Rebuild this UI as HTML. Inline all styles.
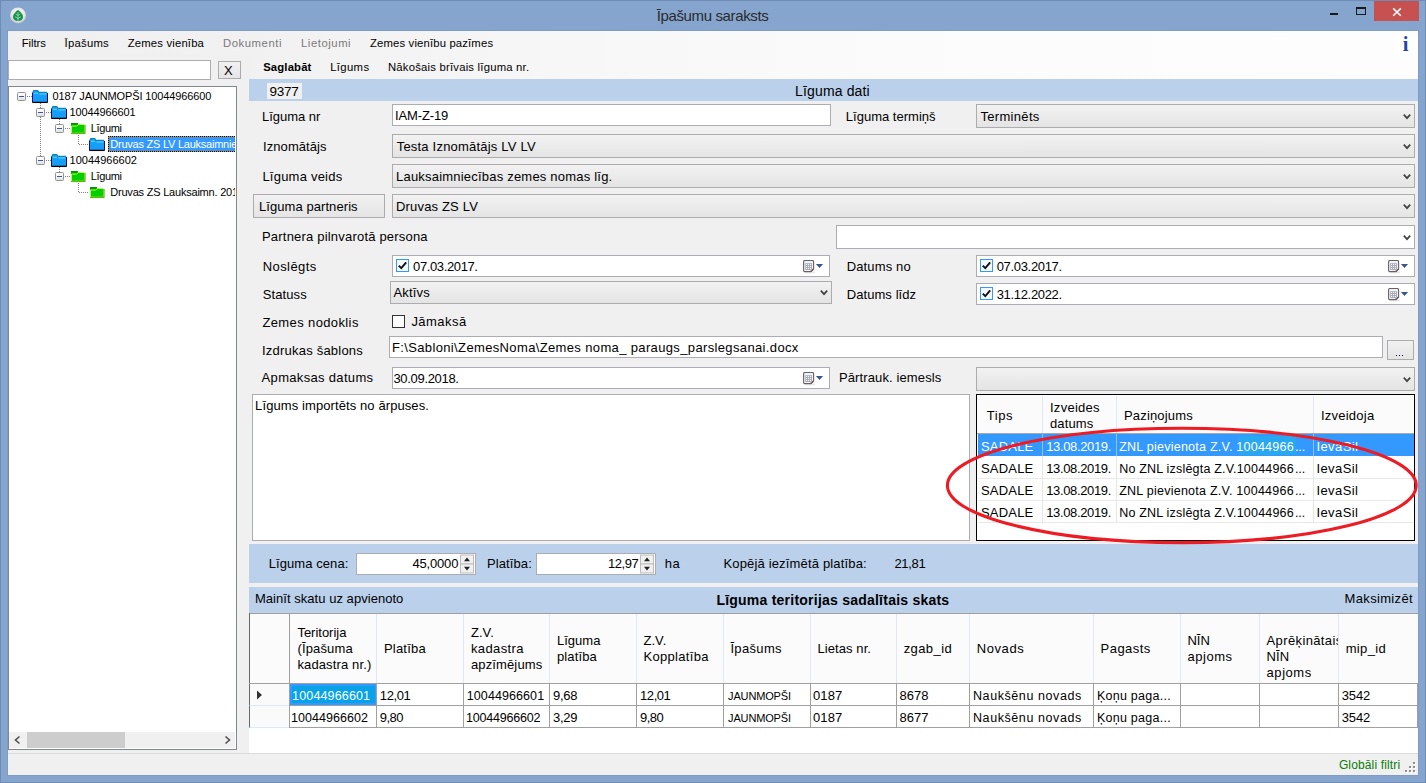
<!DOCTYPE html>
<html><head><meta charset="utf-8"><title>Īpašumu saraksts</title>
<style>
html,body{margin:0;padding:0;}
body{width:1426px;height:783px;position:relative;overflow:hidden;background:#87a6cf;font-family:"Liberation Sans",sans-serif;}
div,span,svg{position:absolute;box-sizing:border-box;}
span{white-space:pre;}

.cb{border:1px solid #acacac;background:linear-gradient(#f2f2f2,#e4e4e4);}
.in{border:1px solid #abadb3;background:#fff;}

</style></head><body>
<div style="left:0px;top:0px;width:1426px;height:783px;background:#86a5ce;border:1px solid #6f8cb5;"></div>
<div style="left:7px;top:30px;width:1412px;height:746px;background:#f0f0f0;border:1px solid #7f9cc4;"></div>
<div style="left:8px;top:31px;width:1410px;height:48px;background:linear-gradient(to right,#f0f0f0,#f1f1f1 17%,#f7f7f7 40%,#fcfcfc 70%,#fdfdfd);"></div>
<div style="left:8px;top:55px;width:241px;height:24px;background:#f0f0f0;"></div>
<svg style="left:9px;top:6px" width="18" height="18" viewBox="0 0 18 18"><defs><radialGradient id="ig" cx="0.5" cy="0.4" r="0.6"><stop offset="0" stop-color="#ffffff"/><stop offset="0.7" stop-color="#e4e4e4"/><stop offset="1" stop-color="#bcc2cb"/></radialGradient></defs><circle cx="9" cy="9.4" r="8" fill="url(#ig)"/><path d="M9 4 C11 5.5 14 8 14 11 C14 13.6 11.8 15 9 15 C6.2 15 4 13.6 4 11 C4 8 7 5.5 9 4Z" fill="#12934a"/><path d="M9 6v9M9 9.5l2.3-1.6M9 9.5L6.7 7.9M9 12.5l3-1.8M9 12.5l-3-1.8" stroke="#bfe3cd" stroke-width="0.7" fill="none"/></svg>
<div style="left:1374px;top:1px;width:45px;height:20px;background:#c75050;"></div>
<svg style="left:1392px;top:7px" width="10" height="10" viewBox="0 0 10 10"><path d="M1.2 1.4L8.8 8.8M8.8 1.4L1.2 8.8" stroke="#fff" stroke-width="1.5"/></svg>
<div style="left:1356px;top:7px;width:10px;height:8px;border:1px solid #1a1a1a;border-top:2px solid #1a1a1a;"></div>
<div style="left:1330px;top:13px;width:8px;height:2px;background:#1a1a1a;"></div>
<div style="left:1395px;top:34px;width:23px;height:20px;background:#fff;"></div>
<div class="in" style="left:8px;top:60px;width:203px;height:20px;"></div>
<div style="left:218px;top:61px;width:23px;height:18px;border:1px solid #acacac;background:linear-gradient(#f1f1f1,#e5e5e5);"></div>
<div style="left:8px;top:86px;width:229px;height:664px;background:#fff;border:1px solid #828790;"></div>
<div style="left:9px;top:732px;width:226px;height:16px;background:#f0f0f0;"></div>
<div style="left:27px;top:732px;width:98px;height:16px;background:#cdcdcd;"></div>
<svg style="left:9px;top:732px" width="226" height="16" viewBox="0 0 226 16"><path d="M10.5 4.5L6.5 8L10.5 11.5M216.5 4.5L220.5 8L216.5 11.5" stroke="#505050" stroke-width="1.6" fill="none"/></svg>
<svg style="left:0;top:0" width="250" height="783" viewBox="0 0 250 783"><defs><linearGradient id="fb" x1="0" y1="0" x2="0" y2="1"><stop offset="0" stop-color="#0aa6ff"/><stop offset="1" stop-color="#1e98f2"/></linearGradient><linearGradient id="pg" x1="0" y1="0" x2="0" y2="1"><stop offset="0" stop-color="#fff"/><stop offset="0.6" stop-color="#f2f2f2"/><stop offset="1" stop-color="#dcdcdc"/></linearGradient></defs><path d="M27 96.5H32 M40.5 103V108 M40.5 117V156 M46 112.5H51 M59.5 119V124 M65 128.5H70 M78.5 135V144.5H89 M46 160.5H51 M59.5 167V172 M65 176.5H70 M78.5 183V192.5H89" stroke="#808080" stroke-width="1" stroke-dasharray="1 1" fill="none"/><g transform="translate(17,92)"><rect x="0.5" y="0.5" width="8" height="8" rx="1" fill="url(#pg)" stroke="#919191"/><path d="M2 4.5H7" stroke="#3a50b4" stroke-width="1"/></g><g transform="translate(36,108)"><rect x="0.5" y="0.5" width="8" height="8" rx="1" fill="url(#pg)" stroke="#919191"/><path d="M2 4.5H7" stroke="#3a50b4" stroke-width="1"/></g><g transform="translate(55,124)"><rect x="0.5" y="0.5" width="8" height="8" rx="1" fill="url(#pg)" stroke="#919191"/><path d="M2 4.5H7" stroke="#3a50b4" stroke-width="1"/></g><g transform="translate(36,156)"><rect x="0.5" y="0.5" width="8" height="8" rx="1" fill="url(#pg)" stroke="#919191"/><path d="M2 4.5H7" stroke="#3a50b4" stroke-width="1"/></g><g transform="translate(55,172)"><rect x="0.5" y="0.5" width="8" height="8" rx="1" fill="url(#pg)" stroke="#919191"/><path d="M2 4.5H7" stroke="#3a50b4" stroke-width="1"/></g><g transform="translate(32,90)"><path d="M0.5 2.5 L1.5 0.5 L6 0.5 L7 2.5 L15.5 2.5 L15.5 12.5 L0.5 12.5 Z" fill="url(#fb)"/><path d="M1 2.2 L1.8 0.6 L5.8 0.6 L6.8 2.4 L15 2.4" stroke="#0c86b4" stroke-width="1.1" fill="none"/><path d="M2 3.3H6M7.5 4H14.5" stroke="#7fd4ff" stroke-width="0.9"/><path d="M0.5 2.5V12" stroke="#0a0a9c" stroke-width="1"/><path d="M15.5 3V12" stroke="#0a0a60" stroke-width="1"/><path d="M0.3 12.4H15.7" stroke="#000" stroke-width="1.3"/></g><g transform="translate(51,106)"><path d="M0.5 2.5 L1.5 0.5 L6 0.5 L7 2.5 L15.5 2.5 L15.5 12.5 L0.5 12.5 Z" fill="url(#fb)"/><path d="M1 2.2 L1.8 0.6 L5.8 0.6 L6.8 2.4 L15 2.4" stroke="#0c86b4" stroke-width="1.1" fill="none"/><path d="M2 3.3H6M7.5 4H14.5" stroke="#7fd4ff" stroke-width="0.9"/><path d="M0.5 2.5V12" stroke="#0a0a9c" stroke-width="1"/><path d="M15.5 3V12" stroke="#0a0a60" stroke-width="1"/><path d="M0.3 12.4H15.7" stroke="#000" stroke-width="1.3"/></g><g transform="translate(71,123)"><path d="M0 0 H7 V2 H14 V10.6 H0 Z" fill="#00d000"/><path d="M0 0 H7.2 L5.6 2.6 H0 Z" fill="#009a00"/><path d="M0.5 10.2V3H5.8L7.3 1.5H13.5" stroke="#b4ff48" stroke-width="1" fill="none"/><path d="M13.5 2V10.1H1" stroke="#86e800" stroke-width="1" fill="none"/><path d="M0 10.6H14.3M14.2 2V10.6" stroke="#5a9c1c" stroke-width="0.8" fill="none"/></g><g transform="translate(89,138)"><path d="M0.5 2.5 L1.5 0.5 L6 0.5 L7 2.5 L15.5 2.5 L15.5 12.5 L0.5 12.5 Z" fill="url(#fb)"/><path d="M1 2.2 L1.8 0.6 L5.8 0.6 L6.8 2.4 L15 2.4" stroke="#0c86b4" stroke-width="1.1" fill="none"/><path d="M2 3.3H6M7.5 4H14.5" stroke="#7fd4ff" stroke-width="0.9"/><path d="M0.5 2.5V12" stroke="#0a0a9c" stroke-width="1"/><path d="M15.5 3V12" stroke="#0a0a60" stroke-width="1"/><path d="M0.3 12.4H15.7" stroke="#000" stroke-width="1.3"/></g><g transform="translate(51,154)"><path d="M0.5 2.5 L1.5 0.5 L6 0.5 L7 2.5 L15.5 2.5 L15.5 12.5 L0.5 12.5 Z" fill="url(#fb)"/><path d="M1 2.2 L1.8 0.6 L5.8 0.6 L6.8 2.4 L15 2.4" stroke="#0c86b4" stroke-width="1.1" fill="none"/><path d="M2 3.3H6M7.5 4H14.5" stroke="#7fd4ff" stroke-width="0.9"/><path d="M0.5 2.5V12" stroke="#0a0a9c" stroke-width="1"/><path d="M15.5 3V12" stroke="#0a0a60" stroke-width="1"/><path d="M0.3 12.4H15.7" stroke="#000" stroke-width="1.3"/></g><g transform="translate(71,171)"><path d="M0 0 H7 V2 H14 V10.6 H0 Z" fill="#00d000"/><path d="M0 0 H7.2 L5.6 2.6 H0 Z" fill="#009a00"/><path d="M0.5 10.2V3H5.8L7.3 1.5H13.5" stroke="#b4ff48" stroke-width="1" fill="none"/><path d="M13.5 2V10.1H1" stroke="#86e800" stroke-width="1" fill="none"/><path d="M0 10.6H14.3M14.2 2V10.6" stroke="#5a9c1c" stroke-width="0.8" fill="none"/></g><g transform="translate(90,187)"><path d="M0 0 H7 V2 H14 V10.6 H0 Z" fill="#00d000"/><path d="M0 0 H7.2 L5.6 2.6 H0 Z" fill="#009a00"/><path d="M0.5 10.2V3H5.8L7.3 1.5H13.5" stroke="#b4ff48" stroke-width="1" fill="none"/><path d="M13.5 2V10.1H1" stroke="#86e800" stroke-width="1" fill="none"/><path d="M0 10.6H14.3M14.2 2V10.6" stroke="#5a9c1c" stroke-width="0.8" fill="none"/></g></svg>
<div style="left:108px;top:136px;width:127px;height:16px;background:repeating-linear-gradient(90deg,#201000 0 1px,#f08a10 1px 2px) 0 0/100% 1px no-repeat,repeating-linear-gradient(90deg,#201000 0 1px,#f08a10 1px 2px) 0 100%/100% 1px no-repeat,repeating-linear-gradient(180deg,#201000 0 1px,#f08a10 1px 2px) 0 0/1px 100% no-repeat,#3399ff;"></div>
<div style="left:249px;top:79px;width:1169px;height:22px;background:#bad0eb;"></div>
<div style="left:267px;top:83px;width:35px;height:16px;background:#f0f0f0;"></div>
<div class="in" style="left:392px;top:104px;width:439px;height:22px;"></div>
<div class="cb" style="left:976px;top:104px;width:439px;height:24px;"></div>
<svg style="left:1401.5px;top:112.7px" width="10" height="8" viewBox="0 0 10 8"><path d="M1.8 1.7L5 5.1L8.2 1.7" stroke="#444" stroke-width="1.8" fill="none"/></svg>
<div class="cb" style="left:392px;top:134px;width:1023px;height:24px;"></div>
<svg style="left:1401.5px;top:142.7px" width="10" height="8" viewBox="0 0 10 8"><path d="M1.8 1.7L5 5.1L8.2 1.7" stroke="#444" stroke-width="1.8" fill="none"/></svg>
<div class="cb" style="left:392px;top:164px;width:1023px;height:24px;"></div>
<svg style="left:1401.5px;top:172.7px" width="10" height="8" viewBox="0 0 10 8"><path d="M1.8 1.7L5 5.1L8.2 1.7" stroke="#444" stroke-width="1.8" fill="none"/></svg>
<div style="left:253px;top:194px;width:132px;height:24px;border:1px solid #acacac;background:linear-gradient(#f1f1f1,#e5e5e5);"></div>
<div class="cb" style="left:392px;top:194px;width:1023px;height:24px;"></div>
<svg style="left:1401.5px;top:202.7px" width="10" height="8" viewBox="0 0 10 8"><path d="M1.8 1.7L5 5.1L8.2 1.7" stroke="#444" stroke-width="1.8" fill="none"/></svg>
<div style="left:836px;top:225px;width:579px;height:24px;background:#fff;border:1px solid #abadb3;"></div>
<svg style="left:1401.5px;top:233.7px" width="10" height="8" viewBox="0 0 10 8"><path d="M1.8 1.7L5 5.1L8.2 1.7" stroke="#444" stroke-width="1.8" fill="none"/></svg>
<div class="in" style="left:392px;top:255px;width:438px;height:22px;"></div>
<svg style="left:803px;top:260px" width="24" height="14" viewBox="0 0 24 14"><path d="M2 12.6H9.6L11.6 10.8V13.2H3Z" fill="#000" opacity="0.12"/><path d="M2 0.5H9.2Q10.6 0.5 10.6 1.9V9.2L8.2 11.6H2Q0.6 11.6 0.6 10.2V1.9Q0.6 0.5 2 0.5Z" fill="#edf2fb" stroke="#6e5f5d" stroke-width="1.1"/><path d="M8.2 11.4V9.4H10.4" fill="none" stroke="#6e5f5d" stroke-width="1"/><rect x="2.2" y="3.2" width="6.8" height="6.8" fill="#a9aeb9"/><g fill="#f4f6fa"><rect x="3" y="4" width="1" height="1"/><rect x="5" y="4" width="1" height="1"/><rect x="7" y="4" width="1" height="1"/><rect x="3" y="6" width="1" height="1"/><rect x="5" y="6" width="1" height="1"/><rect x="7" y="6" width="1" height="1"/><rect x="3" y="8" width="1" height="1"/><rect x="5" y="8" width="1" height="1"/><rect x="7" y="8" width="1" height="1"/></g><path d="M12.9 3.9H20.1L16.5 8.1Z" fill="#3a5688"/></svg>
<div style="left:396px;top:259px;width:13px;height:13px;border:1px solid #3399ff;background:#f3f9ff;"><svg style="left:0;top:0" width="11" height="11" viewBox="0 0 11 11"><path d="M1.8 5.6L4.3 8.2L9.2 2.4" stroke="#111" stroke-width="1.9" fill="none"/></svg></div>
<div class="in" style="left:976px;top:255px;width:439px;height:22px;"></div>
<svg style="left:1388px;top:260px" width="24" height="14" viewBox="0 0 24 14"><path d="M2 12.6H9.6L11.6 10.8V13.2H3Z" fill="#000" opacity="0.12"/><path d="M2 0.5H9.2Q10.6 0.5 10.6 1.9V9.2L8.2 11.6H2Q0.6 11.6 0.6 10.2V1.9Q0.6 0.5 2 0.5Z" fill="#edf2fb" stroke="#6e5f5d" stroke-width="1.1"/><path d="M8.2 11.4V9.4H10.4" fill="none" stroke="#6e5f5d" stroke-width="1"/><rect x="2.2" y="3.2" width="6.8" height="6.8" fill="#a9aeb9"/><g fill="#f4f6fa"><rect x="3" y="4" width="1" height="1"/><rect x="5" y="4" width="1" height="1"/><rect x="7" y="4" width="1" height="1"/><rect x="3" y="6" width="1" height="1"/><rect x="5" y="6" width="1" height="1"/><rect x="7" y="6" width="1" height="1"/><rect x="3" y="8" width="1" height="1"/><rect x="5" y="8" width="1" height="1"/><rect x="7" y="8" width="1" height="1"/></g><path d="M12.9 3.9H20.1L16.5 8.1Z" fill="#3a5688"/></svg>
<div style="left:980px;top:259px;width:13px;height:13px;border:1px solid #3399ff;background:#f3f9ff;"><svg style="left:0;top:0" width="11" height="11" viewBox="0 0 11 11"><path d="M1.8 5.6L4.3 8.2L9.2 2.4" stroke="#111" stroke-width="1.9" fill="none"/></svg></div>
<div class="cb" style="left:390px;top:281px;width:442px;height:23px;"></div>
<svg style="left:818.5px;top:289.2px" width="10" height="8" viewBox="0 0 10 8"><path d="M1.8 1.7L5 5.1L8.2 1.7" stroke="#444" stroke-width="1.8" fill="none"/></svg>
<div class="in" style="left:976px;top:283px;width:439px;height:22px;"></div>
<svg style="left:1388px;top:288px" width="24" height="14" viewBox="0 0 24 14"><path d="M2 12.6H9.6L11.6 10.8V13.2H3Z" fill="#000" opacity="0.12"/><path d="M2 0.5H9.2Q10.6 0.5 10.6 1.9V9.2L8.2 11.6H2Q0.6 11.6 0.6 10.2V1.9Q0.6 0.5 2 0.5Z" fill="#edf2fb" stroke="#6e5f5d" stroke-width="1.1"/><path d="M8.2 11.4V9.4H10.4" fill="none" stroke="#6e5f5d" stroke-width="1"/><rect x="2.2" y="3.2" width="6.8" height="6.8" fill="#a9aeb9"/><g fill="#f4f6fa"><rect x="3" y="4" width="1" height="1"/><rect x="5" y="4" width="1" height="1"/><rect x="7" y="4" width="1" height="1"/><rect x="3" y="6" width="1" height="1"/><rect x="5" y="6" width="1" height="1"/><rect x="7" y="6" width="1" height="1"/><rect x="3" y="8" width="1" height="1"/><rect x="5" y="8" width="1" height="1"/><rect x="7" y="8" width="1" height="1"/></g><path d="M12.9 3.9H20.1L16.5 8.1Z" fill="#3a5688"/></svg>
<div style="left:980px;top:287px;width:13px;height:13px;border:1px solid #3399ff;background:#f3f9ff;"><svg style="left:0;top:0" width="11" height="11" viewBox="0 0 11 11"><path d="M1.8 5.6L4.3 8.2L9.2 2.4" stroke="#111" stroke-width="1.9" fill="none"/></svg></div>
<div style="left:392px;top:315px;width:13px;height:13px;border:1px solid #333;background:#fff;"></div>
<div class="in" style="left:389px;top:336px;width:994px;height:22px;"></div>
<div style="left:1387px;top:340px;width:27px;height:20px;border:1px solid #acacac;background:linear-gradient(#f1f1f1,#e5e5e5);"></div>
<div style="left:1396px;top:355px;width:1px;height:1px;background:#1a1040;"></div>
<div style="left:1399px;top:355px;width:1px;height:1px;background:#1a1040;"></div>
<div style="left:1402px;top:355px;width:1px;height:1px;background:#1a1040;"></div>
<div class="in" style="left:392px;top:367px;width:438px;height:22px;"></div>
<svg style="left:803px;top:372px" width="24" height="14" viewBox="0 0 24 14"><path d="M2 12.6H9.6L11.6 10.8V13.2H3Z" fill="#000" opacity="0.12"/><path d="M2 0.5H9.2Q10.6 0.5 10.6 1.9V9.2L8.2 11.6H2Q0.6 11.6 0.6 10.2V1.9Q0.6 0.5 2 0.5Z" fill="#edf2fb" stroke="#6e5f5d" stroke-width="1.1"/><path d="M8.2 11.4V9.4H10.4" fill="none" stroke="#6e5f5d" stroke-width="1"/><rect x="2.2" y="3.2" width="6.8" height="6.8" fill="#a9aeb9"/><g fill="#f4f6fa"><rect x="3" y="4" width="1" height="1"/><rect x="5" y="4" width="1" height="1"/><rect x="7" y="4" width="1" height="1"/><rect x="3" y="6" width="1" height="1"/><rect x="5" y="6" width="1" height="1"/><rect x="7" y="6" width="1" height="1"/><rect x="3" y="8" width="1" height="1"/><rect x="5" y="8" width="1" height="1"/><rect x="7" y="8" width="1" height="1"/></g><path d="M12.9 3.9H20.1L16.5 8.1Z" fill="#3a5688"/></svg>
<div class="cb" style="left:976px;top:367px;width:439px;height:24px;"></div>
<svg style="left:1401.5px;top:375.7px" width="10" height="8" viewBox="0 0 10 8"><path d="M1.8 1.7L5 5.1L8.2 1.7" stroke="#444" stroke-width="1.8" fill="none"/></svg>
<div style="left:252px;top:394px;width:718px;height:147px;border:1px solid #abadb3;background:#fff;"></div>
<div style="left:976px;top:394px;width:439px;height:147px;background:#fff;border:1px solid #000;"></div>
<div style="left:977px;top:395px;width:437px;height:39px;background:#fbfbfb;"></div>
<div style="left:1042px;top:396px;width:1px;height:38px;background:#dfe9f5;"></div>
<div style="left:1042px;top:434px;width:1px;height:88px;background:#e6e6e6;"></div>
<div style="left:1116px;top:396px;width:1px;height:38px;background:#dfe9f5;"></div>
<div style="left:1116px;top:434px;width:1px;height:88px;background:#e6e6e6;"></div>
<div style="left:1313px;top:396px;width:1px;height:38px;background:#dfe9f5;"></div>
<div style="left:1313px;top:434px;width:1px;height:88px;background:#e6e6e6;"></div>
<div style="left:978px;top:434px;width:436px;height:22px;background:#3399ff;"></div>
<div style="left:1042px;top:434px;width:1px;height:22px;background:#8cc3ff;"></div>
<div style="left:1116px;top:434px;width:1px;height:22px;background:#8cc3ff;"></div>
<div style="left:1313px;top:434px;width:1px;height:22px;background:#8cc3ff;"></div>
<div style="left:978px;top:478px;width:435px;height:1px;background:#e9e9e9;"></div>
<div style="left:978px;top:500px;width:435px;height:1px;background:#e9e9e9;"></div>
<div style="left:978px;top:522px;width:435px;height:1px;background:#e9e9e9;"></div>
<div style="left:977px;top:433px;width:437px;height:1px;background:#a8a8a8;"></div>
<div style="left:1239px;top:436px;width:57px;height:19px;background:#28a8f0;"></div>
<svg style="left:940px;top:420px;z-index:50" width="486" height="130" viewBox="940 420 486 130"><ellipse cx="1181.8" cy="485.4" rx="234.4" ry="57.2" fill="none" stroke="#ed1c24" stroke-width="3.1"/></svg>
<div style="left:249px;top:544px;width:1169px;height:39px;background:#bad0eb;"></div>
<div style="left:249px;top:583px;width:1169px;height:4px;background:#f0f0f0;"></div>
<div style="left:249px;top:587px;width:1169px;height:26px;background:#bad0eb;"></div>
<div class="in" style="left:356px;top:553px;width:120px;height:22px;"></div>
<svg style="left:459px;top:554px" width="16" height="20" viewBox="0 0 16 20"><rect x="1.5" y="1" width="13" height="9" fill="#f0f0f0" stroke="#bdbdbd" stroke-width="1"/><rect x="1.5" y="10" width="13" height="9" fill="#f0f0f0" stroke="#bdbdbd" stroke-width="1"/><path d="M5 7.2L8 3.6L11 7.2Z M5 12.8L8 16.4L11 12.8Z" fill="#222"/></svg>
<div class="in" style="left:536px;top:553px;width:120px;height:22px;"></div>
<svg style="left:639px;top:554px" width="16" height="20" viewBox="0 0 16 20"><rect x="1.5" y="1" width="13" height="9" fill="#f0f0f0" stroke="#bdbdbd" stroke-width="1"/><rect x="1.5" y="10" width="13" height="9" fill="#f0f0f0" stroke="#bdbdbd" stroke-width="1"/><path d="M5 7.2L8 3.6L11 7.2Z M5 12.8L8 16.4L11 12.8Z" fill="#222"/></svg>
<div style="left:249px;top:613px;width:1169px;height:140px;background:#fff;"></div>
<div style="left:249px;top:613px;width:1169px;height:71px;background:#fbfbfb;"></div>
<div style="left:249px;top:613px;width:1169px;height:1px;background:#a0a0a0;"></div>
<div style="left:249px;top:613px;width:1px;height:114px;background:#696969;"></div>
<div style="left:289px;top:614px;width:1px;height:69px;background:#dfe9f5;"></div>
<div style="left:376px;top:614px;width:1px;height:69px;background:#dfe9f5;"></div>
<div style="left:463px;top:614px;width:1px;height:69px;background:#dfe9f5;"></div>
<div style="left:549px;top:614px;width:1px;height:69px;background:#dfe9f5;"></div>
<div style="left:636px;top:614px;width:1px;height:69px;background:#dfe9f5;"></div>
<div style="left:723px;top:614px;width:1px;height:69px;background:#dfe9f5;"></div>
<div style="left:810px;top:614px;width:1px;height:69px;background:#dfe9f5;"></div>
<div style="left:896px;top:614px;width:1px;height:69px;background:#dfe9f5;"></div>
<div style="left:969px;top:614px;width:1px;height:69px;background:#dfe9f5;"></div>
<div style="left:1093px;top:614px;width:1px;height:69px;background:#dfe9f5;"></div>
<div style="left:1180px;top:614px;width:1px;height:69px;background:#dfe9f5;"></div>
<div style="left:1259px;top:614px;width:1px;height:69px;background:#dfe9f5;"></div>
<div style="left:1338px;top:614px;width:1px;height:69px;background:#dfe9f5;"></div>
<div style="left:289px;top:613px;width:1px;height:71px;background:#a0a0a0;"></div>
<div style="left:249px;top:683px;width:1169px;height:1px;background:#a0a0a0;"></div>
<div style="left:249px;top:705px;width:1169px;height:1px;background:#a0a0a0;"></div>
<div style="left:249px;top:727px;width:1169px;height:1px;background:#a0a0a0;"></div>
<div style="left:289px;top:683px;width:1px;height:45px;background:#a0a0a0;"></div>
<div style="left:376px;top:683px;width:1px;height:45px;background:#a0a0a0;"></div>
<div style="left:463px;top:683px;width:1px;height:45px;background:#a0a0a0;"></div>
<div style="left:549px;top:683px;width:1px;height:45px;background:#a0a0a0;"></div>
<div style="left:636px;top:683px;width:1px;height:45px;background:#a0a0a0;"></div>
<div style="left:723px;top:683px;width:1px;height:45px;background:#a0a0a0;"></div>
<div style="left:810px;top:683px;width:1px;height:45px;background:#a0a0a0;"></div>
<div style="left:896px;top:683px;width:1px;height:45px;background:#a0a0a0;"></div>
<div style="left:969px;top:683px;width:1px;height:45px;background:#a0a0a0;"></div>
<div style="left:1093px;top:683px;width:1px;height:45px;background:#a0a0a0;"></div>
<div style="left:1180px;top:683px;width:1px;height:45px;background:#a0a0a0;"></div>
<div style="left:1259px;top:683px;width:1px;height:45px;background:#a0a0a0;"></div>
<div style="left:1338px;top:683px;width:1px;height:45px;background:#a0a0a0;"></div>
<div style="left:1417px;top:683px;width:1px;height:45px;background:#a0a0a0;"></div>
<div style="left:250px;top:684px;width:39px;height:21px;background:#fafafa;"></div>
<div style="left:250px;top:706px;width:39px;height:21px;background:#fafafa;"></div>
<div style="left:250px;top:705px;width:39px;height:1px;background:#dfe9f5;"></div>
<div style="left:250px;top:727px;width:39px;height:1px;background:#dfe9f5;"></div>
<div style="left:290px;top:684px;width:86px;height:21px;background:#3399ff;"></div>
<div style="left:292px;top:686px;width:83px;height:17px;background:#07a2e8;"></div>
<svg style="left:256px;top:689px" width="8" height="12" viewBox="0 0 8 12"><path d="M1 1.4L6 6L1 10.6Z" fill="#333"/></svg>
<div style="left:8px;top:753px;width:1410px;height:1px;background:#dcdcdc;"></div>
<svg style="left:1405px;top:761px" width="13" height="13" viewBox="0 0 13 13"><g fill="#fff"><rect x="9" y="2" width="2" height="2"/><rect x="9" y="6" width="2" height="2"/><rect x="9" y="10" width="2" height="2"/><rect x="5" y="6" width="2" height="2"/><rect x="5" y="10" width="2" height="2"/><rect x="1" y="10" width="2" height="2"/></g><g fill="#8e8e8e"><rect x="8" y="1" width="2" height="2"/><rect x="8" y="5" width="2" height="2"/><rect x="8" y="9" width="2" height="2"/><rect x="4" y="5" width="2" height="2"/><rect x="4" y="9" width="2" height="2"/><rect x="0" y="9" width="2" height="2"/></g></svg>
<span style="left:656.70px;top:7.00px;font:400 15px/17px 'Liberation Sans', sans-serif;letter-spacing:-0.365px;color:#2a2a2a;">Īpašumu saraksts</span>
<span style="left:1402.80px;top:33.00px;font:700 20.5px/23px 'Liberation Serif', serif;letter-spacing:0.000px;color:#1f45a8;">i</span>
<span style="left:21.70px;top:37.00px;font:400 11.3px/12px 'Liberation Sans', sans-serif;letter-spacing:-0.047px;color:#000;">Filtrs</span>
<span style="left:64.60px;top:37.00px;font:400 11.3px/12px 'Liberation Sans', sans-serif;letter-spacing:0.242px;color:#000;">Īpašums</span>
<span style="left:127.70px;top:37.00px;font:400 11.3px/12px 'Liberation Sans', sans-serif;letter-spacing:0.177px;color:#000;">Zemes vienība</span>
<span style="left:223.00px;top:37.00px;font:400 11.3px/12px 'Liberation Sans', sans-serif;letter-spacing:0.556px;color:#7a7a7a;">Dokumenti</span>
<span style="left:301.00px;top:37.00px;font:400 11.3px/12px 'Liberation Sans', sans-serif;letter-spacing:0.553px;color:#7a7a7a;">Lietojumi</span>
<span style="left:370.00px;top:37.00px;font:400 11.3px/12px 'Liberation Sans', sans-serif;letter-spacing:0.155px;color:#000;">Zemes vienību pazīmes</span>
<span style="left:263.20px;top:61.00px;font:700 11.3px/12px 'Liberation Sans', sans-serif;letter-spacing:0.151px;color:#000;">Saglabāt</span>
<span style="left:330.20px;top:61.00px;font:400 11.3px/12px 'Liberation Sans', sans-serif;letter-spacing:0.359px;color:#000;">Līgums</span>
<span style="left:388.00px;top:61.00px;font:400 11.3px/12px 'Liberation Sans', sans-serif;letter-spacing:0.210px;color:#000;">Nākošais brīvais līguma nr.</span>
<span style="left:223.90px;top:63.00px;font:400 13px/15px 'Liberation Sans', sans-serif;letter-spacing:0.000px;color:#000;">X</span>
<span style="left:52.40px;top:90.00px;font:400 11px/12px 'Liberation Sans', sans-serif;letter-spacing:-0.122px;color:#000;">0187 JAUNMOPŠI 10044966600</span>
<span style="left:69.60px;top:106.00px;font:400 11px/12px 'Liberation Sans', sans-serif;letter-spacing:-0.136px;color:#000;">10044966601</span>
<span style="left:90.70px;top:122.00px;font:400 11px/12px 'Liberation Sans', sans-serif;letter-spacing:-0.355px;color:#000;">Līgumi</span>
<div style="left:107.90px;top:135.00px;width:127.10px;height:18px;overflow:hidden;"><span style="left:2.4px;top:3px;font:400 11px/12px 'Liberation Sans', sans-serif;letter-spacing:-0.237px;color:#fff;">Druvas ZS LV Lauksaimniec</span></div>
<span style="left:69.60px;top:154.00px;font:400 11px/12px 'Liberation Sans', sans-serif;letter-spacing:0.000px;color:#000;">10044966602</span>
<span style="left:90.70px;top:170.00px;font:400 11px/12px 'Liberation Sans', sans-serif;letter-spacing:-0.355px;color:#000;">Līgumi</span>
<div style="left:107.90px;top:183.00px;width:126.80px;height:18px;overflow:hidden;"><span style="left:2.4px;top:3px;font:400 11px/12px 'Liberation Sans', sans-serif;letter-spacing:-0.211px;color:#000;">Druvas ZS Lauksaimn. 2017</span></div>
<span style="left:269.60px;top:84.00px;font:400 13.5px/15px 'Liberation Sans', sans-serif;letter-spacing:-0.262px;color:#000;">9377</span>
<span style="left:795.10px;top:83.00px;font:400 14px/16px 'Liberation Sans', sans-serif;letter-spacing:0.139px;color:#000;">Līguma dati</span>
<span style="left:262.00px;top:109.00px;font:400 13px/15px 'Liberation Sans', sans-serif;letter-spacing:-0.027px;color:#000;">Līguma nr</span>
<span style="left:395.00px;top:108.00px;font:400 13px/15px 'Liberation Sans', sans-serif;letter-spacing:-0.121px;color:#000;">IAM-Z-19</span>
<span style="left:845.80px;top:109.00px;font:400 13px/15px 'Liberation Sans', sans-serif;letter-spacing:0.015px;color:#000;">Līguma termiņš</span>
<span style="left:980.40px;top:109.00px;font:400 13px/15px 'Liberation Sans', sans-serif;letter-spacing:0.327px;color:#000;">Terminēts</span>
<span style="left:263.10px;top:139.00px;font:400 13px/15px 'Liberation Sans', sans-serif;letter-spacing:0.062px;color:#000;">Iznomātājs</span>
<span style="left:396.70px;top:139.00px;font:400 13px/15px 'Liberation Sans', sans-serif;letter-spacing:0.207px;color:#000;">Testa Iznomātājs LV LV</span>
<span style="left:262.40px;top:169.00px;font:400 13px/15px 'Liberation Sans', sans-serif;letter-spacing:0.223px;color:#000;">Līguma veids</span>
<span style="left:396.00px;top:169.00px;font:400 13px/15px 'Liberation Sans', sans-serif;letter-spacing:0.208px;color:#000;">Lauksaimniecības zemes nomas līg.</span>
<span style="left:258.90px;top:199.00px;font:400 13px/15px 'Liberation Sans', sans-serif;letter-spacing:0.077px;color:#000;">Līguma partneris</span>
<span style="left:396.00px;top:199.00px;font:400 13px/15px 'Liberation Sans', sans-serif;letter-spacing:0.171px;color:#000;">Druvas ZS LV</span>
<span style="left:262.00px;top:229.00px;font:400 13px/15px 'Liberation Sans', sans-serif;letter-spacing:0.199px;color:#000;">Partnera pilnvarotā persona</span>
<span style="left:262.70px;top:259.00px;font:400 13px/15px 'Liberation Sans', sans-serif;letter-spacing:0.428px;color:#000;">Noslēgts</span>
<span style="left:413.10px;top:259.00px;font:400 13px/15px 'Liberation Sans', sans-serif;letter-spacing:-0.381px;color:#000;">07.03.2017.</span>
<span style="left:846.70px;top:259.00px;font:400 13px/15px 'Liberation Sans', sans-serif;letter-spacing:0.136px;color:#000;">Datums no</span>
<span style="left:996.70px;top:259.00px;font:400 13px/15px 'Liberation Sans', sans-serif;letter-spacing:-0.326px;color:#000;">07.03.2017.</span>
<span style="left:262.70px;top:287.00px;font:400 13px/15px 'Liberation Sans', sans-serif;letter-spacing:0.106px;color:#000;">Statuss</span>
<span style="left:393.40px;top:285.00px;font:400 13px/15px 'Liberation Sans', sans-serif;letter-spacing:0.182px;color:#000;">Aktīvs</span>
<span style="left:846.70px;top:287.00px;font:400 13px/15px 'Liberation Sans', sans-serif;letter-spacing:0.078px;color:#000;">Datums līdz</span>
<span style="left:996.70px;top:287.00px;font:400 13px/15px 'Liberation Sans', sans-serif;letter-spacing:-0.326px;color:#000;">31.12.2022.</span>
<span style="left:262.40px;top:315.00px;font:400 13px/15px 'Liberation Sans', sans-serif;letter-spacing:0.382px;color:#000;">Zemes nodoklis</span>
<span style="left:411.40px;top:314.00px;font:400 13px/15px 'Liberation Sans', sans-serif;letter-spacing:0.467px;color:#000;">Jāmaksā</span>
<span style="left:262.00px;top:343.00px;font:400 13px/15px 'Liberation Sans', sans-serif;letter-spacing:0.215px;color:#000;">Izdrukas šablons</span>
<span style="left:392.00px;top:340.00px;font:400 13px/15px 'Liberation Sans', sans-serif;letter-spacing:0.359px;color:#000;">F:\Sabloni\ZemesNoma\Zemes noma_ paraugs_parslegsanai.docx</span>
<span style="left:261.60px;top:370.00px;font:400 13px/15px 'Liberation Sans', sans-serif;letter-spacing:0.324px;color:#000;">Apmaksas datums</span>
<span style="left:393.40px;top:371.00px;font:400 13px/15px 'Liberation Sans', sans-serif;letter-spacing:-0.308px;color:#000;">30.09.2018.</span>
<span style="left:838.90px;top:370.00px;font:400 13px/15px 'Liberation Sans', sans-serif;letter-spacing:0.122px;color:#000;">Pārtrauk. iemesls</span>
<span style="left:255.10px;top:398.00px;font:400 13px/15px 'Liberation Sans', sans-serif;letter-spacing:0.095px;color:#000;">Līgums importēts no ārpuses.</span>
<span style="left:986.70px;top:408.00px;font:400 13px/15px 'Liberation Sans', sans-serif;letter-spacing:0.580px;color:#000;">Tips</span>
<span style="left:1050.00px;top:400.00px;font:400 13px/15px 'Liberation Sans', sans-serif;letter-spacing:0.262px;color:#000;">Izveides</span>
<span style="left:1050.00px;top:416.00px;font:400 13px/15px 'Liberation Sans', sans-serif;letter-spacing:0.127px;color:#000;">datums</span>
<span style="left:1124.00px;top:408.00px;font:400 13px/15px 'Liberation Sans', sans-serif;letter-spacing:0.160px;color:#000;">Paziņojums</span>
<span style="left:1320.90px;top:408.00px;font:400 13px/15px 'Liberation Sans', sans-serif;letter-spacing:0.243px;color:#000;">Izveidoja</span>
<span style="left:981.00px;top:439.00px;font:400 13px/15px 'Liberation Sans', sans-serif;letter-spacing:0.198px;color:#fff;">SADALE</span>
<span style="left:1046.20px;top:439.00px;font:400 13px/15px 'Liberation Sans', sans-serif;letter-spacing:-0.362px;color:#fff;">13.08.2019.</span>
<span style="left:1119.20px;top:440.00px;font:400 12.5px/14px 'Liberation Sans', sans-serif;letter-spacing:0.241px;color:#fff;">ZNL pievienota Z.V. 10044966</span>
<span style="left:1294.90px;top:440.00px;font:400 12.5px/14px 'Liberation Sans', sans-serif;letter-spacing:-0.074px;color:#fff;">...</span>
<span style="left:1316.40px;top:439.00px;font:400 13px/15px 'Liberation Sans', sans-serif;letter-spacing:0.424px;color:#fff;">IevaSil</span>
<span style="left:981.00px;top:461.00px;font:400 13px/15px 'Liberation Sans', sans-serif;letter-spacing:0.198px;color:#000;">SADALE</span>
<span style="left:1046.20px;top:461.00px;font:400 13px/15px 'Liberation Sans', sans-serif;letter-spacing:-0.362px;color:#000;">13.08.2019.</span>
<span style="left:1119.20px;top:462.00px;font:400 12.5px/14px 'Liberation Sans', sans-serif;letter-spacing:0.192px;color:#000;">No ZNL izslēgta Z.V.10044966</span>
<span style="left:1294.90px;top:462.00px;font:400 12.5px/14px 'Liberation Sans', sans-serif;letter-spacing:-0.074px;color:#000;">...</span>
<span style="left:1316.40px;top:461.00px;font:400 13px/15px 'Liberation Sans', sans-serif;letter-spacing:0.424px;color:#000;">IevaSil</span>
<span style="left:981.00px;top:483.00px;font:400 13px/15px 'Liberation Sans', sans-serif;letter-spacing:0.198px;color:#000;">SADALE</span>
<span style="left:1046.20px;top:483.00px;font:400 13px/15px 'Liberation Sans', sans-serif;letter-spacing:-0.362px;color:#000;">13.08.2019.</span>
<span style="left:1119.20px;top:484.00px;font:400 12.5px/14px 'Liberation Sans', sans-serif;letter-spacing:0.241px;color:#000;">ZNL pievienota Z.V. 10044966</span>
<span style="left:1294.90px;top:484.00px;font:400 12.5px/14px 'Liberation Sans', sans-serif;letter-spacing:-0.074px;color:#000;">...</span>
<span style="left:1316.40px;top:483.00px;font:400 13px/15px 'Liberation Sans', sans-serif;letter-spacing:0.424px;color:#000;">IevaSil</span>
<span style="left:981.00px;top:505.00px;font:400 13px/15px 'Liberation Sans', sans-serif;letter-spacing:0.198px;color:#000;">SADALE</span>
<span style="left:1046.20px;top:505.00px;font:400 13px/15px 'Liberation Sans', sans-serif;letter-spacing:-0.362px;color:#000;">13.08.2019.</span>
<span style="left:1119.20px;top:506.00px;font:400 12.5px/14px 'Liberation Sans', sans-serif;letter-spacing:0.192px;color:#000;">No ZNL izslēgta Z.V.10044966</span>
<span style="left:1294.90px;top:506.00px;font:400 12.5px/14px 'Liberation Sans', sans-serif;letter-spacing:-0.074px;color:#000;">...</span>
<span style="left:1316.40px;top:505.00px;font:400 13px/15px 'Liberation Sans', sans-serif;letter-spacing:0.424px;color:#000;">IevaSil</span>
<span style="left:268.80px;top:556.00px;font:400 13px/15px 'Liberation Sans', sans-serif;letter-spacing:0.068px;color:#000;">Līguma cena:</span>
<span style="left:412.40px;top:556.00px;font:400 13px/15px 'Liberation Sans', sans-serif;letter-spacing:-0.171px;color:#000;">45,0000</span>
<span style="left:487.00px;top:556.00px;font:400 13px/15px 'Liberation Sans', sans-serif;letter-spacing:0.101px;color:#000;">Platība:</span>
<span style="left:607.90px;top:556.00px;font:400 13px/15px 'Liberation Sans', sans-serif;letter-spacing:-0.409px;color:#000;">12,97</span>
<span style="left:664.70px;top:556.00px;font:400 13px/15px 'Liberation Sans', sans-serif;letter-spacing:0.616px;color:#000;">ha</span>
<span style="left:723.40px;top:556.00px;font:400 13px/15px 'Liberation Sans', sans-serif;letter-spacing:0.167px;color:#000;">Kopējā iezīmētā platība:</span>
<span style="left:894.40px;top:556.00px;font:400 13px/15px 'Liberation Sans', sans-serif;letter-spacing:-0.309px;color:#000;">21,81</span>
<span style="left:254.90px;top:591.00px;font:400 13px/15px 'Liberation Sans', sans-serif;letter-spacing:0.043px;color:#000;">Mainīt skatu uz apvienoto</span>
<span style="left:716.40px;top:592.00px;font:700 14px/16px 'Liberation Sans', sans-serif;letter-spacing:0.232px;color:#000;">Līguma teritorijas sadalītais skats</span>
<span style="left:1344.60px;top:591.00px;font:400 13px/15px 'Liberation Sans', sans-serif;letter-spacing:0.328px;color:#000;">Maksimizēt</span>
<span style="left:297.40px;top:625.00px;font:400 13px/15px 'Liberation Sans', sans-serif;letter-spacing:-0.013px;color:#000;">Teritorija</span>
<span style="left:297.40px;top:641.00px;font:400 13px/15px 'Liberation Sans', sans-serif;letter-spacing:0.162px;color:#000;">(Īpašuma</span>
<span style="left:297.40px;top:657.00px;font:400 13px/15px 'Liberation Sans', sans-serif;letter-spacing:0.133px;color:#000;">kadastra nr.)</span>
<span style="left:383.90px;top:641.00px;font:400 13px/15px 'Liberation Sans', sans-serif;letter-spacing:0.217px;color:#000;">Platība</span>
<span style="left:470.90px;top:625.00px;font:400 13px/15px 'Liberation Sans', sans-serif;letter-spacing:0.086px;color:#000;">Z.V.</span>
<span style="left:470.90px;top:641.00px;font:400 13px/15px 'Liberation Sans', sans-serif;letter-spacing:0.391px;color:#000;">kadastra</span>
<span style="left:470.90px;top:657.00px;font:400 13px/15px 'Liberation Sans', sans-serif;letter-spacing:0.142px;color:#000;">apzīmējums</span>
<span style="left:556.90px;top:633.00px;font:400 13px/15px 'Liberation Sans', sans-serif;letter-spacing:0.021px;color:#000;">Līguma</span>
<span style="left:556.90px;top:649.00px;font:400 13px/15px 'Liberation Sans', sans-serif;letter-spacing:0.136px;color:#000;">platība</span>
<span style="left:643.40px;top:633.00px;font:400 13px/15px 'Liberation Sans', sans-serif;letter-spacing:0.086px;color:#000;">Z.V.</span>
<span style="left:643.40px;top:649.00px;font:400 13px/15px 'Liberation Sans', sans-serif;letter-spacing:0.333px;color:#000;">Kopplatība</span>
<span style="left:730.40px;top:641.00px;font:400 13px/15px 'Liberation Sans', sans-serif;letter-spacing:0.337px;color:#000;">Īpašums</span>
<span style="left:817.40px;top:641.00px;font:400 13px/15px 'Liberation Sans', sans-serif;letter-spacing:0.093px;color:#000;">Lietas nr.</span>
<span style="left:903.70px;top:641.00px;font:400 13px/15px 'Liberation Sans', sans-serif;letter-spacing:0.408px;color:#000;">zgab_id</span>
<span style="left:976.70px;top:641.00px;font:400 13px/15px 'Liberation Sans', sans-serif;letter-spacing:0.604px;color:#000;">Novads</span>
<span style="left:1100.60px;top:641.00px;font:400 13px/15px 'Liberation Sans', sans-serif;letter-spacing:0.445px;color:#000;">Pagasts</span>
<span style="left:1187.40px;top:633.00px;font:400 13px/15px 'Liberation Sans', sans-serif;letter-spacing:0.036px;color:#000;">NĪN</span>
<span style="left:1187.40px;top:649.00px;font:400 13px/15px 'Liberation Sans', sans-serif;letter-spacing:0.546px;color:#000;">apjoms</span>
<div style="left:1264.20px;top:630.00px;width:73.80px;height:21px;overflow:hidden;"><span style="left:2.4px;top:3px;font:400 13px/15px 'Liberation Sans', sans-serif;letter-spacing:0.368px;color:#000;">Aprēķinātais</span></div>
<span style="left:1266.60px;top:649.00px;font:400 13px/15px 'Liberation Sans', sans-serif;letter-spacing:0.036px;color:#000;">NĪN</span>
<span style="left:1266.60px;top:665.00px;font:400 13px/15px 'Liberation Sans', sans-serif;letter-spacing:0.546px;color:#000;">apjoms</span>
<span style="left:1345.70px;top:641.00px;font:400 13px/15px 'Liberation Sans', sans-serif;letter-spacing:0.334px;color:#000;">mip_id</span>
<span style="left:292.10px;top:689.00px;font:400 12.5px/14px 'Liberation Sans', sans-serif;letter-spacing:0.147px;color:#fff;">10044966601</span>
<span style="left:379.80px;top:688.00px;font:400 13px/15px 'Liberation Sans', sans-serif;letter-spacing:-0.389px;color:#000;">12,01</span>
<span style="left:466.80px;top:689.00px;font:400 12.5px/14px 'Liberation Sans', sans-serif;letter-spacing:0.083px;color:#000;">10044966601</span>
<span style="left:552.90px;top:688.00px;font:400 13px/15px 'Liberation Sans', sans-serif;letter-spacing:-0.203px;color:#000;">9,68</span>
<span style="left:640.10px;top:688.00px;font:400 13px/15px 'Liberation Sans', sans-serif;letter-spacing:-0.449px;color:#000;">12,01</span>
<span style="left:728.10px;top:690.00px;font:400 11px/12px 'Liberation Sans', sans-serif;letter-spacing:-0.165px;color:#000;">JAUNMOPŠI</span>
<span style="left:813.10px;top:688.00px;font:400 13px/15px 'Liberation Sans', sans-serif;letter-spacing:0.045px;color:#000;">0187</span>
<span style="left:899.40px;top:688.00px;font:400 13px/15px 'Liberation Sans', sans-serif;letter-spacing:0.020px;color:#000;">8678</span>
<span style="left:973.00px;top:689.00px;font:400 12.5px/14px 'Liberation Sans', sans-serif;letter-spacing:0.581px;color:#000;">Naukšēnu novads</span>
<span style="left:1096.90px;top:689.00px;font:400 12.5px/14px 'Liberation Sans', sans-serif;letter-spacing:0.258px;color:#000;">Ķoņu paga...</span>
<span style="left:1341.80px;top:688.00px;font:400 13px/15px 'Liberation Sans', sans-serif;letter-spacing:-0.180px;color:#000;">3542</span>
<span style="left:291.00px;top:711.00px;font:400 12.5px/14px 'Liberation Sans', sans-serif;letter-spacing:0.056px;color:#000;">10044966602</span>
<span style="left:379.80px;top:710.00px;font:400 13px/15px 'Liberation Sans', sans-serif;letter-spacing:-0.553px;color:#000;">9,80</span>
<span style="left:465.90px;top:711.00px;font:400 12.5px/14px 'Liberation Sans', sans-serif;letter-spacing:-0.180px;color:#000;">10044966602</span>
<span style="left:552.90px;top:710.00px;font:400 13px/15px 'Liberation Sans', sans-serif;letter-spacing:-0.203px;color:#000;">3,29</span>
<span style="left:640.10px;top:710.00px;font:400 13px/15px 'Liberation Sans', sans-serif;letter-spacing:-0.553px;color:#000;">9,80</span>
<span style="left:728.10px;top:712.00px;font:400 11px/12px 'Liberation Sans', sans-serif;letter-spacing:-0.165px;color:#000;">JAUNMOPŠI</span>
<span style="left:813.10px;top:710.00px;font:400 13px/15px 'Liberation Sans', sans-serif;letter-spacing:0.045px;color:#000;">0187</span>
<span style="left:899.40px;top:710.00px;font:400 13px/15px 'Liberation Sans', sans-serif;letter-spacing:0.020px;color:#000;">8677</span>
<span style="left:973.00px;top:711.00px;font:400 12.5px/14px 'Liberation Sans', sans-serif;letter-spacing:0.581px;color:#000;">Naukšēnu novads</span>
<span style="left:1096.90px;top:711.00px;font:400 12.5px/14px 'Liberation Sans', sans-serif;letter-spacing:0.258px;color:#000;">Ķoņu paga...</span>
<span style="left:1341.80px;top:710.00px;font:400 13px/15px 'Liberation Sans', sans-serif;letter-spacing:-0.180px;color:#000;">3542</span>
<span style="left:1338.90px;top:758.00px;font:400 12px/14px 'Liberation Sans', sans-serif;letter-spacing:0.139px;color:#0a7d0a;">Globāli filtri</span>

</body></html>
